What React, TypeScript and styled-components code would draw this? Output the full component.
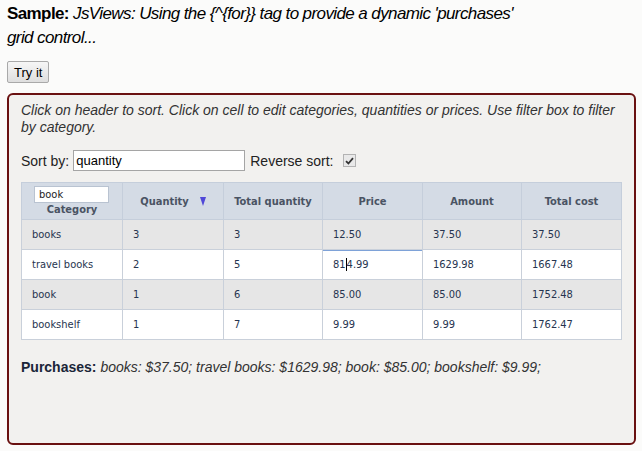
import React, { useState } from 'react'
import styled, { createGlobalStyle } from 'styled-components'

const GlobalStyle = createGlobalStyle`
  body {
    margin: 0;
    background: #fbfbfa;
    font-family: 'Liberation Sans', Arial, sans-serif;
    color: #111;
  }
`

const Page = styled.div`
  padding: 2px 6px 6px 7px;
`

const Heading = styled.div`
  max-width: 530px;
  font-size: 17px;
  line-height: 24px;
  letter-spacing: -0.6px;
  color: #000;

  b {
    font-weight: bold;
  }
  i {
    font-style: italic;
  }
`

const TryButton = styled.button`
  margin-top: 11px;
  height: 22px;
  padding: 0 6px;
  font-family: 'Liberation Sans', Arial, sans-serif;
  font-size: 13px;
  color: #000;
  border: 1px solid #a9a9a9;
  border-radius: 2px;
  background: linear-gradient(#f6f6f6, #dedede);
`

const Demo = styled.div`
  box-sizing: border-box;
  width: 629px;
  height: 352px;
  margin-top: 10px;
  padding: 7px 12px;
  border: 2px solid #6a1111;
  border-radius: 6px;
  background: #f2f1ef;
`

const Hint = styled.div`
  font-size: 14px;
  line-height: 17px;
  font-style: italic;
  color: #333;
`

const SortBar = styled.div`
  display: flex;
  align-items: center;
  margin-top: 14px;
  font-size: 14px;
  color: #222;
`

const SortInput = styled.input`
  box-sizing: border-box;
  width: 172px;
  height: 21px;
  margin: 0 5px 0 4px;
  padding: 0 2px;
  font-family: 'Liberation Sans', Arial, sans-serif;
  font-size: 13px;
  color: #000;
  border: 1px solid #a5a5a5;
  background: #fff;
`

const Check = styled.span`
  display: inline-flex;
  align-items: center;
  justify-content: center;
  width: 11px;
  height: 11px;
  margin-left: 9px;
  border: 1px solid #b3b3b3;
  background: #e9e9e9;
`

const Grid = styled.table`
  margin-top: 11px;
  width: 600px;
  table-layout: fixed;
  border-collapse: collapse;
  font-family: 'DejaVu Sans Condensed', 'DejaVu Sans', Tahoma, sans-serif;
  font-size: 11px;
`

const Th = styled.th`
  height: 36px;
  padding: 0;
  border: 1px solid #c5cedb;
  background: #d4dbe5;
  color: #4a5363;
  font-weight: bold;
  text-align: center;
  vertical-align: middle;
`

const FilterInput = styled.input`
  display: block;
  box-sizing: border-box;
  width: 75px;
  height: 17px;
  margin: 0 0 0 12px;
  padding: 0 4px;
  font-family: 'DejaVu Sans Condensed', 'DejaVu Sans', Tahoma, sans-serif;
  font-size: 11px;
  color: #222;
  border: 1px solid #b9c3d1;
  background: #fff;
`

const SortArrow = styled.span`
  display: inline-block;
  margin-left: 11px;
  width: 0;
  height: 0;
  border-left: 3px solid transparent;
  border-right: 3px solid transparent;
  border-top: 9px solid #5048d8;
  vertical-align: -1px;
`

const Row = styled.tr<{ $striped: boolean }>`
  background: ${p => (p.$striped ? '#e6e6e6' : '#ffffff')};
`

const Td = styled.td<{ $editing?: boolean }>`
  height: 29px;
  padding: 0 10px;
  border: 1px solid #c9d0da;
  color: #26344f;
  vertical-align: middle;
  white-space: nowrap;
  ${p => p.$editing && 'padding: 0; background: #fff;'}
`

const CellEditor = styled.div`
  box-sizing: border-box;
  height: 30px;
  margin: -1px;
  padding: 0 10px;
  display: flex;
  align-items: center;
  border: 1px solid #7ea2d8;
  background: #fff;
`

const Caret = styled.span`
  display: inline-block;
  width: 1px;
  height: 13px;
  background: #000;
  vertical-align: -2px;
`

const Summary = styled.div`
  margin-top: 19px;
  font-size: 14px;
  color: #222;

  b {
    color: #1a2538;
  }
  i {
    color: #333;
  }
`

interface Purchase {
  category: string
  quantity: number
  price: number
}

const purchases: Purchase[] = [
  { category: 'books', quantity: 3, price: 12.5 },
  { category: 'travel books', quantity: 2, price: 814.99 },
  { category: 'book', quantity: 1, price: 85 },
  { category: 'bookshelf', quantity: 1, price: 9.99 },
]

const cols = [101, 101, 99, 100, 99, 100]

export default function App() {
  const [filter, setFilter] = useState('book')
  const [sortBy, setSortBy] = useState('quantity')

  let totalQty = 0
  let totalCost = 0
  const rows = purchases.map(p => {
    const amount = p.quantity * p.price
    totalQty += p.quantity
    totalCost += amount
    return { ...p, amount, totalQty, totalCost }
  })

  return (
    <Page>
      <GlobalStyle />
      <Heading>
        <b>Sample:</b> <i>JsViews: Using the {'{^{for}}'} tag to provide a dynamic 'purchases' grid control...</i>
      </Heading>
      <TryButton>Try it</TryButton>
      <Demo>
        <Hint>
          Click on header to sort. Click on cell to edit categories, quantities or prices. Use filter box to filter
          by category.
        </Hint>
        <SortBar>
          Sort by:
          <SortInput value={sortBy} onChange={e => setSortBy(e.target.value)} />
          Reverse sort:
          <Check>
            <svg width="9" height="8" viewBox="0 0 9 8">
              <path d="M1 4.2 L3.4 6.5 L8 1.2" fill="none" stroke="#333" strokeWidth="1.8" />
            </svg>
          </Check>
        </SortBar>
        <Grid>
          <colgroup>
            {cols.map((w, i) => (
              <col key={i} style={{ width: w }} />
            ))}
          </colgroup>
          <thead>
            <tr>
              <Th>
                <FilterInput value={filter} onChange={e => setFilter(e.target.value)} />
                Category
              </Th>
              <Th>
                Quantity
                <SortArrow />
              </Th>
              <Th>Total quantity</Th>
              <Th>Price</Th>
              <Th>Amount</Th>
              <Th>Total cost</Th>
            </tr>
          </thead>
          <tbody>
            {rows.map((r, i) => (
              <Row key={r.category} $striped={i % 2 === 0}>
                <Td>{r.category}</Td>
                <Td>{r.quantity}</Td>
                <Td>{r.totalQty}</Td>
                {i === 1 ? (
                  <Td $editing>
                    <CellEditor>
                      81<Caret />4.99
                    </CellEditor>
                  </Td>
                ) : (
                  <Td>{r.price.toFixed(2)}</Td>
                )}
                <Td>{r.amount.toFixed(2)}</Td>
                <Td>{r.totalCost.toFixed(2)}</Td>
              </Row>
            ))}
          </tbody>
        </Grid>
        <Summary>
          <b>Purchases:</b>{' '}
          <i>books: $37.50; travel books: $1629.98; book: $85.00; bookshelf: $9.99;</i>
        </Summary>
      </Demo>
    </Page>
  )
}
